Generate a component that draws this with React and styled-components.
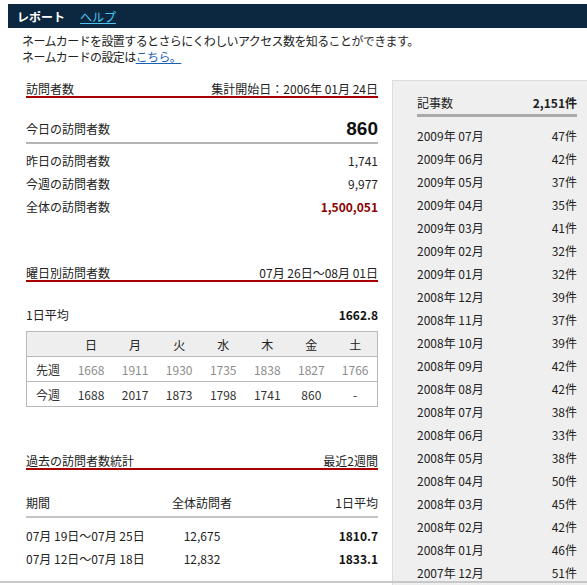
import styled, { createGlobalStyle } from 'styled-components';

const GlobalStyle = createGlobalStyle`
  html, body {
    margin: 0;
    padding: 0;
    background: #fff;
    overflow: hidden;
  }
  body {
    font-family: "Noto Sans CJK JP", "Liberation Sans", sans-serif;
    font-size: 12px;
    color: #333;
  }
`;

const months = [
  ['2009年 07月', '47件'],
  ['2009年 06月', '42件'],
  ['2009年 05月', '37件'],
  ['2009年 04月', '35件'],
  ['2009年 03月', '41件'],
  ['2009年 02月', '32件'],
  ['2009年 01月', '32件'],
  ['2008年 12月', '39件'],
  ['2008年 11月', '37件'],
  ['2008年 10月', '39件'],
  ['2008年 09月', '42件'],
  ['2008年 08月', '42件'],
  ['2008年 07月', '38件'],
  ['2008年 06月', '33件'],
  ['2008年 05月', '38件'],
  ['2008年 04月', '50件'],
  ['2008年 03月', '45件'],
  ['2008年 02月', '42件'],
  ['2008年 01月', '46件'],
  ['2007年 12月', '51件']
];

const days = ['日', '月', '火', '水', '木', '金', '土'];
const lastWeek = ['1668', '1911', '1930', '1735', '1838', '1827', '1766'];
const thisWeek = ['1688', '2017', '1873', '1798', '1741', '860', '-'];

export default function App() {
  return (
    <Page>
      <GlobalStyle />
      <TopBar>
        <BarTitle>レポート</BarTitle>
        <BarLink href="#">ヘルプ</BarLink>
      </TopBar>
      <Intro>
        <p>ネームカードを設置するとさらにくわしいアクセス数を知ることができます。</p>
        <p>
          ネームカードの設定は<IntroLink href="#">こちら。</IntroLink>
        </p>
      </Intro>

      <Columns>
        <Main>
          <SectionHead>
            <span>訪問者数</span>
            <span>集計開始日：2006年 01月 24日</span>
          </SectionHead>
          <TodayRow>
            <span>今日の訪問者数</span>
            <BigNum>860</BigNum>
          </TodayRow>
          <StatList>
            <StatRow>
              <span>昨日の訪問者数</span>
              <span>1,741</span>
            </StatRow>
            <StatRow>
              <span>今週の訪問者数</span>
              <span>9,977</span>
            </StatRow>
            <StatRow>
              <span>全体の訪問者数</span>
              <Total>1,500,051</Total>
            </StatRow>
          </StatList>

          <SectionHead $top={46}>
            <span>曜日別訪問者数</span>
            <span>07月 26日～08月 01日</span>
          </SectionHead>
          <AvgRow>
            <span>1日平均</span>
            <strong>1662.8</strong>
          </AvgRow>
          <WeekTable>
            <thead>
              <tr>
                <HeadCell />
                {days.map((d) => (
                  <HeadCell key={d}>{d}</HeadCell>
                ))}
              </tr>
            </thead>
            <tbody>
              <tr>
                <LabelCell>先週</LabelCell>
                {lastWeek.map((n, i) => (
                  <NumCell key={i} $muted>
                    {n}
                  </NumCell>
                ))}
              </tr>
              <tr>
                <LabelCell>今週</LabelCell>
                {thisWeek.map((n, i) => (
                  <NumCell key={i}>{n}</NumCell>
                ))}
              </tr>
            </tbody>
          </WeekTable>

          <SectionHead $top={45}>
            <span>過去の訪問者数統計</span>
            <span>最近2週間</span>
          </SectionHead>
          <PastHead>
            <span>期間</span>
            <Center>全体訪問者</Center>
            <Right>1日平均</Right>
          </PastHead>
          <PastList>
            <PastRow>
              <span>07月 19日～07月 25日</span>
              <Center>12,675</Center>
              <Right>
                <strong>1810.7</strong>
              </Right>
            </PastRow>
            <PastRow>
              <span>07月 12日～07月 18日</span>
              <Center>12,832</Center>
              <Right>
                <strong>1833.1</strong>
              </Right>
            </PastRow>
          </PastList>
        </Main>

        <Sidebar>
          <SideHead>
            <span>記事数</span>
            <strong>2,151件</strong>
          </SideHead>
          <MonthList>
            {months.map(([m, c]) => (
              <MonthRow key={m}>
                <span>{m}</span>
                <span>{c}</span>
              </MonthRow>
            ))}
          </MonthList>
        </Sidebar>
      </Columns>
      <BottomEdge />
    </Page>
  );
}

const Page = styled.div`
  width: 587px;
  height: 585px;
  overflow: hidden;
  padding-top: 4px;
  box-sizing: border-box;
`;

const TopBar = styled.div`
  margin-left: 8px;
  height: 24px;
  background: #0c2840;
  display: flex;
  align-items: center;
  gap: 15px;
  padding-left: 9px;
`;

const BarTitle = styled.span`
  color: #fff;
  font-weight: bold;
  font-size: 12px;
`;

const BarLink = styled.a`
  color: #4cc3f2;
  font-size: 12px;
  text-decoration: underline;
`;

const Intro = styled.div`
  padding-left: 22px;
  line-height: 16px;
  margin-top: 5px;
  color: #222;
  letter-spacing: -0.6px;

  p {
    margin: 0;
  }
`;

const IntroLink = styled.a`
  color: #1a5fb4;
  text-decoration: underline;
`;

const Columns = styled.div`
  display: flex;
  align-items: flex-start;
  gap: 14px;
  margin-top: 15px;
  padding-left: 26px;
`;

const Main = styled.div`
  width: 352px;
  flex-shrink: 0;
`;

const SectionHead = styled.div`
  display: flex;
  justify-content: space-between;
  line-height: 15px;
  padding-top: 1px;
  margin-top: ${(p) => p.$top || 0}px;
  border-bottom: 2px solid #a80000;
  color: #222;
`;

const TodayRow = styled.div`
  display: flex;
  justify-content: space-between;
  align-items: flex-end;
  margin-top: 22px;
  height: 22px;
  border-bottom: 2px solid #b3b3b3;
  color: #222;

  span {
    line-height: 16px;
    padding-bottom: 5px;
  }
`;

const BigNum = styled.strong`
  font-family: "Liberation Sans", Arial, sans-serif;
  font-size: 19px;
  line-height: 22px;
  padding-bottom: 2px;
  color: #111;
`;

const StatList = styled.div`
  margin-top: 5px;
`;

const StatRow = styled.div`
  display: flex;
  justify-content: space-between;
  line-height: 23px;
  color: #222;
`;

const Total = styled.strong`
  color: #8b0000;
`;

const AvgRow = styled.div`
  display: flex;
  justify-content: space-between;
  line-height: 15px;
  margin-top: 25px;
  color: #222;

  strong {
    color: #111;
  }
`;

const WeekTable = styled.table`
  width: 352px;
  margin-top: 9px;
  border-collapse: collapse;
  border: 1px solid #b8b8b8;
  table-layout: fixed;
`;

const HeadCell = styled.th`
  background: #eeeeee;
  font-weight: normal;
  height: 24px;
  padding: 0;
  text-align: center;
  color: #222;
  border-bottom: 1px solid #b8b8b8;

  &:first-child {
    width: 42px;
  }
`;

const LabelCell = styled.td`
  height: 24px;
  padding: 0;
  text-align: center;
  color: #333;
  border-bottom: 1px solid #b8b8b8;
`;

const NumCell = styled.td`
  height: 24px;
  padding: 0;
  text-align: center;
  color: ${(p) => (p.$muted ? '#8c8c8c' : '#333')};
  border-bottom: 1px solid #b8b8b8;
`;

const PastHead = styled.div`
  display: grid;
  grid-template-columns: 1fr 100px 1fr;
  margin-top: 25px;
  line-height: 16px;
  padding-bottom: 5px;
  border-bottom: 2px solid #c4c4c4;
  color: #222;
`;

const PastList = styled.div`
  margin-top: 6px;
`;

const PastRow = styled.div`
  display: grid;
  grid-template-columns: 1fr 100px 1fr;
  line-height: 23px;
  color: #222;

  strong {
    color: #111;
  }
`;

const Center = styled.span`
  text-align: center;
`;

const Right = styled.span`
  text-align: right;
`;

const Sidebar = styled.div`
  width: 210px;
  flex-shrink: 0;
  background: #efefef;
  border: 1px solid #dcdcdc;
  padding: 14px 24px 0;
  box-sizing: border-box;
  height: 520px;
`;

const SideHead = styled.div`
  display: flex;
  justify-content: space-between;
  line-height: 16px;
  padding-bottom: 3px;
  border-bottom: 3px solid #aaaaaa;
  color: #222;

  strong {
    color: #222;
  }
`;

const MonthList = styled.div`
  margin-top: 7px;
`;

const MonthRow = styled.div`
  display: flex;
  justify-content: space-between;
  line-height: 23px;
  color: #222;
`;

const BottomEdge = styled.div`
  position: fixed;
  left: 0;
  right: 0;
  bottom: 2px;
  height: 2px;
  background: #c8c8c8;
`;
